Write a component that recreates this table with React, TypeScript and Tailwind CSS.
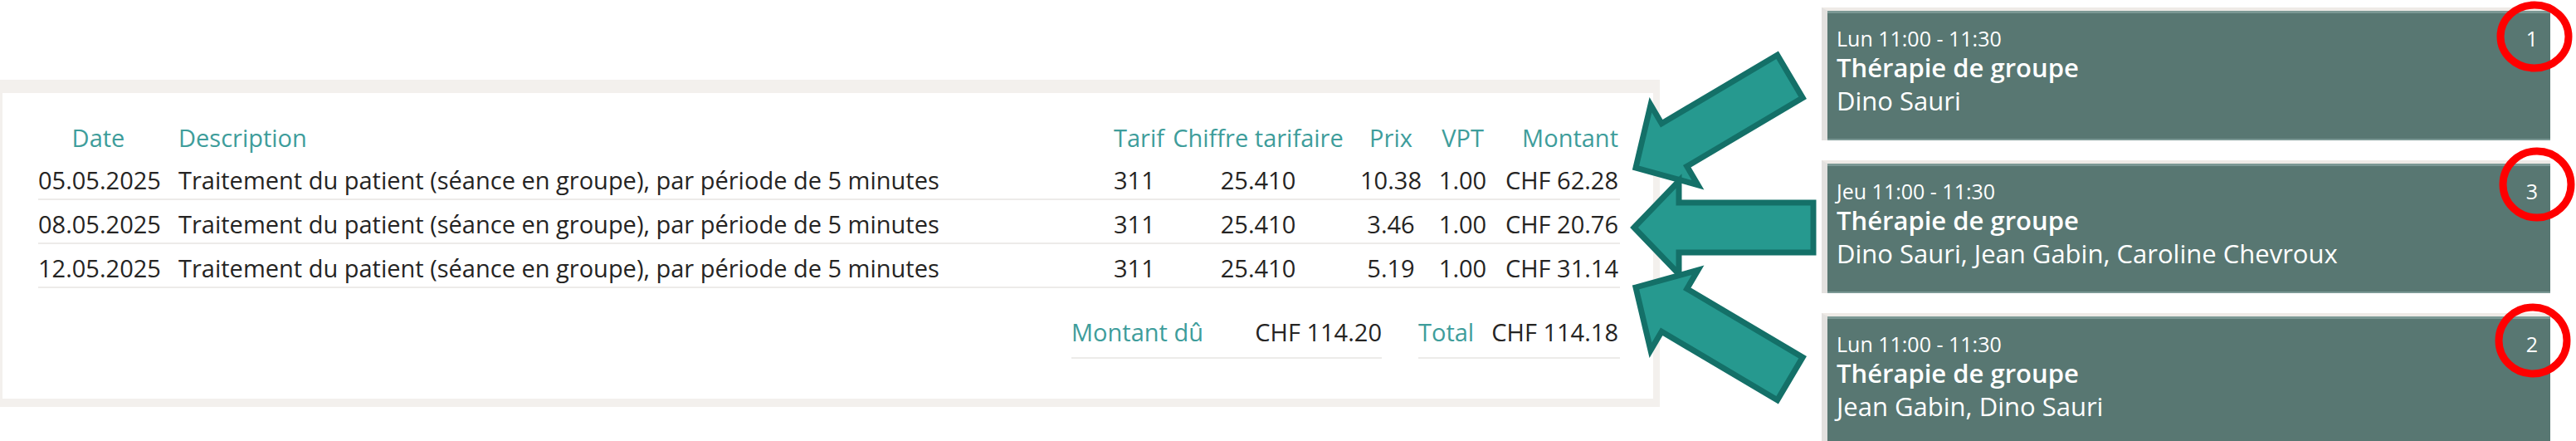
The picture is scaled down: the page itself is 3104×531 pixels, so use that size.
import React from "react";

const lignes = [
  { date: "05.05.2025", prix: "10.38", montant: "CHF 62.28" },
  { date: "08.05.2025", prix: "3.46", montant: "CHF 20.76" },
  { date: "12.05.2025", prix: "5.19", montant: "CHF 31.14" },
];

const description = "Traitement du patient (séance en groupe), par période de 5 minutes";

const seances = [
  { jour: "Lun", noms: "Dino Sauri", nb: "1" },
  { jour: "Jeu", noms: "Dino Sauri, Jean Gabin, Caroline Chevroux", nb: "3" },
  { jour: "Lun", noms: "Jean Gabin, Dino Sauri", nb: "2" },
];

// fleche pointant vers la gauche, pointe a l'origine
const fleche = "M0 0 L54 -56 L54 -30 L216 -30 L216 30 L54 30 L54 56 Z";

function Facture() {
  return (
    <section className="mt-[96px] h-[394px] w-[2000px] shrink-0 border-t-[16px] border-l-[3px] border-r-[8px] border-b-[10px] border-[#f3f0ed] bg-white pl-[43px] pr-[40px] pt-[32px] text-[29px]">
      <div className="flex h-[44px] leading-[44px] text-[#3e9d9b]">
        <div className="w-[145px] text-center">Date</div>
        <div className="ml-[24px] flex-1">Description</div>
        <div className="w-[63px]">Tarif</div>
        <div className="w-[222px] text-center">Chiffre tarifaire</div>
        <div className="w-[98px] text-center">Prix</div>
        <div className="w-[75px] text-center">VPT</div>
        <div className="w-[152px] pr-[2px] text-right">Montant</div>
      </div>

      {lignes.map((l) => (
        <div key={l.date} className="flex h-[53px] border-b-2 border-[#edebe9] pt-[9px] leading-[40px] text-[#252423]">
          <div className="w-[145px] text-center">{l.date}</div>
          <div className="ml-[24px] flex-1 whitespace-nowrap">{description}</div>
          <div className="w-[63px]">311</div>
          <div className="w-[222px] text-center">25.410</div>
          <div className="w-[98px] text-center">{l.prix}</div>
          <div className="w-[75px] text-center">1.00</div>
          <div className="w-[152px] pr-[2px] text-right">{l.montant}</div>
        </div>
      ))}

      <div className="mt-[33px] flex justify-end gap-[44px] leading-[40px]">
        <div className="flex w-[374px] justify-between border-b-2 border-[#edebe9] pb-[10px]">
          <span className="text-[#3e9d9b]">Montant dû</span>
          <span className="text-[#252423]">CHF 114.20</span>
        </div>
        <div className="flex w-[243px] justify-between border-b-2 border-[#edebe9] pb-[10px] pr-[2px]">
          <span className="text-[#3e9d9b]">Total</span>
          <span className="text-[#252423]">CHF 114.18</span>
        </div>
      </div>
    </section>
  );
}

function Seance({ jour, noms, nb }: { jour: string; noms: string; nb: string }) {
  return (
    <div className="flex h-[160px] shrink-0 border-l-[7px] border-t-[4px] border-l-[#e3e1df] border-t-[#eeeae6] bg-[#587772]">
      <div className="flex flex-1 justify-between border-t-[3px] border-b-2 border-[#7b9894] pl-[11px] pr-[15px] pt-[15px] text-white">
        <div className="flex flex-col">
          <span className="text-[25px] leading-[30px]">{jour} 11:00 - 11:30</span>
          <span className="text-[31px] font-semibold leading-[40px]">Thérapie de groupe</span>
          <span className="text-[31px] leading-[40px]">{noms}</span>
        </div>
        <span className="text-[25px] leading-[30px]">{nb}</span>
      </div>
    </div>
  );
}

export default function App() {
  return (
    <div className="relative flex h-[531px] w-[3104px] items-start overflow-hidden bg-white font-['Open_Sans',sans-serif]">
      <Facture />

      <div className="ml-[195px] mt-[9px] flex w-[878px] shrink-0 flex-col gap-[24px]">
        {seances.map((s, i) => (
          <Seance key={i} {...s} />
        ))}
      </div>

      <svg className="pointer-events-none absolute left-0 top-0" width={3104} height={531} viewBox="0 0 3104 531">
        <g fill="#26998f" stroke="#147068" strokeWidth={7} strokeLinejoin="miter">
          <path d={fleche} transform="translate(1971 202) rotate(-30.6)" />
          <path d={fleche} transform="translate(1969 274)" />
          <path d={fleche} transform="translate(1971 346) rotate(30.6)" />
        </g>
        <g fill="none" stroke="#ff0000" strokeWidth={9}>
          <ellipse cx={3054} cy={44} rx={41} ry={38} />
          <ellipse cx={3057} cy={222} rx={41} ry={40} />
          <ellipse cx={3052} cy={410} rx={41} ry={40} />
        </g>
      </svg>
    </div>
  );
}
